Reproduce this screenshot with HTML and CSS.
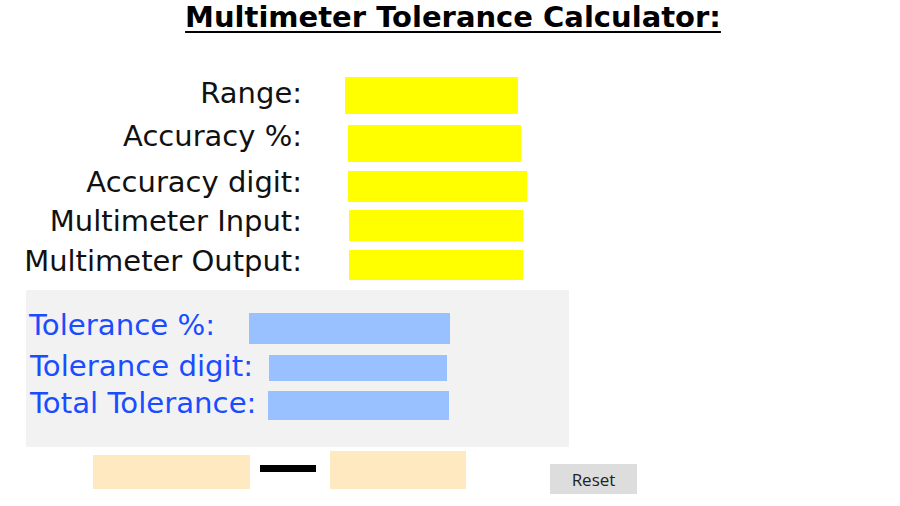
FILE: index.html
```html
<!DOCTYPE html>
<html>
<head>
<meta charset="utf-8">
<link rel="stylesheet" href="styles.css">
</head>
<body>
<h1 class="title">Multimeter Tolerance Calculator:</h1>
<div class="form">
  <div class="row r1"><span class="label lab-range">Range:</span><div class="field f1"></div></div>
  <div class="row r2"><span class="label">Accuracy %:</span><div class="field f2"></div></div>
  <div class="row r3"><span class="label">Accuracy digit:</span><div class="field f3"></div></div>
  <div class="row r4"><span class="label">Multimeter Input:</span><div class="field f4"></div></div>
  <div class="row r5"><span class="label">Multimeter Output:</span><div class="field f5"></div></div>
</div>
<div class="panel">
  <div class="prow p1"><span class="plabel">Tolerance %:</span><div class="out o1"></div></div>
  <div class="prow p2"><span class="plabel">Tolerance digit:</span><div class="out o2"></div></div>
  <div class="prow p3"><span class="plabel">Total Tolerance:</span><div class="out o3"></div></div>
</div>
<div class="bottom">
  <div class="range-box b1"></div>
  <div class="dash"></div>
  <div class="range-box b2"></div>
  <button class="reset">Reset</button>
</div>
</body>
</html>
```

FILE: styles.css
```css
html, body {
  margin: 0;
  padding: 0;
  background: #ffffff;
}
body {
  width: 900px;
  height: 506px;
  overflow: hidden;
  font-family: "DejaVu Sans", Verdana, sans-serif;
  color: #111111;
}
.title {
  margin: 0;
  padding-left: 6px;
  font-size: 29px;
  line-height: 34px;
  font-weight: bold;
  text-align: center;
  text-decoration: underline;
  text-decoration-thickness: 2px;
  text-underline-offset: 4px;
  color: #000;
}
.form {
  margin-top: 43px;
}
.row {
  display: flex;
  align-items: flex-start;
}
.label {
  width: 302px;
  text-align: right;
  font-size: 29px;
  line-height: 32px;
  margin-top: -5px;
  white-space: nowrap;
}
.lab-range { margin-top: 0; }
.field {
  background: #ffff00;
  height: 31px;
}
.r2 { margin-top: 11px; }
.r3 { margin-top: 9px; }
.r4 { margin-top: 8px; }
.r5 { margin-top: 9px; }
.f1 { margin-left: 43px; width: 173px; height: 37px; }
.f2 { margin-left: 46px; width: 173px; height: 37px; }
.f3 { margin-left: 46px; width: 179px; }
.f4 { margin-left: 47px; width: 174px; }
.f5 { margin-left: 47px; width: 174px; height: 30px; }

.panel {
  margin: 10px 0 0 26px;
  width: 543px;
  height: 157px;
  box-sizing: border-box;
  background: #f2f2f2;
  padding: 23px 0 0 3px;
}
.prow {
  display: flex;
  align-items: flex-start;
}
.plabel {
  color: #1a4dff;
  font-size: 29.2px;
  line-height: 32px;
  margin-top: -4px;
  white-space: nowrap;
}
.out {
  background: #99c0ff;
}
.o1 { margin-left: auto; margin-right: 119px; width: 201px; height: 31px; }
.p1 .plabel { width: 220px; }
.p2 { margin-top: 11px; }
.p2 .plabel { margin-top: -5px; padding-left: 1px; width: 239px; }
.o2 { width: 178px; height: 26px; }
.p3 { margin-top: 9px; }
.p3 .plabel { margin-top: -4px; padding-left: 1px; width: 238px; }
.o3 { width: 181px; height: 29px; }

.bottom {
  display: flex;
  align-items: flex-start;
  margin: 4px 0 0 93px;
}
.range-box {
  background: #ffe9c0;
}
.b1 { margin-top: 4px; width: 157px; height: 34px; }
.b2 { width: 136px; height: 38px; }
.dash {
  margin: 14px 14px 0 10px;
  width: 56px;
  height: 7px;
  background: #000;
}
.reset {
  margin: 13px 0 0 84px;
  width: 87px;
  height: 30px;
  border: none;
  background: #dddddd;
  font-family: "Open Sans", "Noto Sans", sans-serif;
  font-size: 17px;
  color: #222;
  padding: 0;
}
```
